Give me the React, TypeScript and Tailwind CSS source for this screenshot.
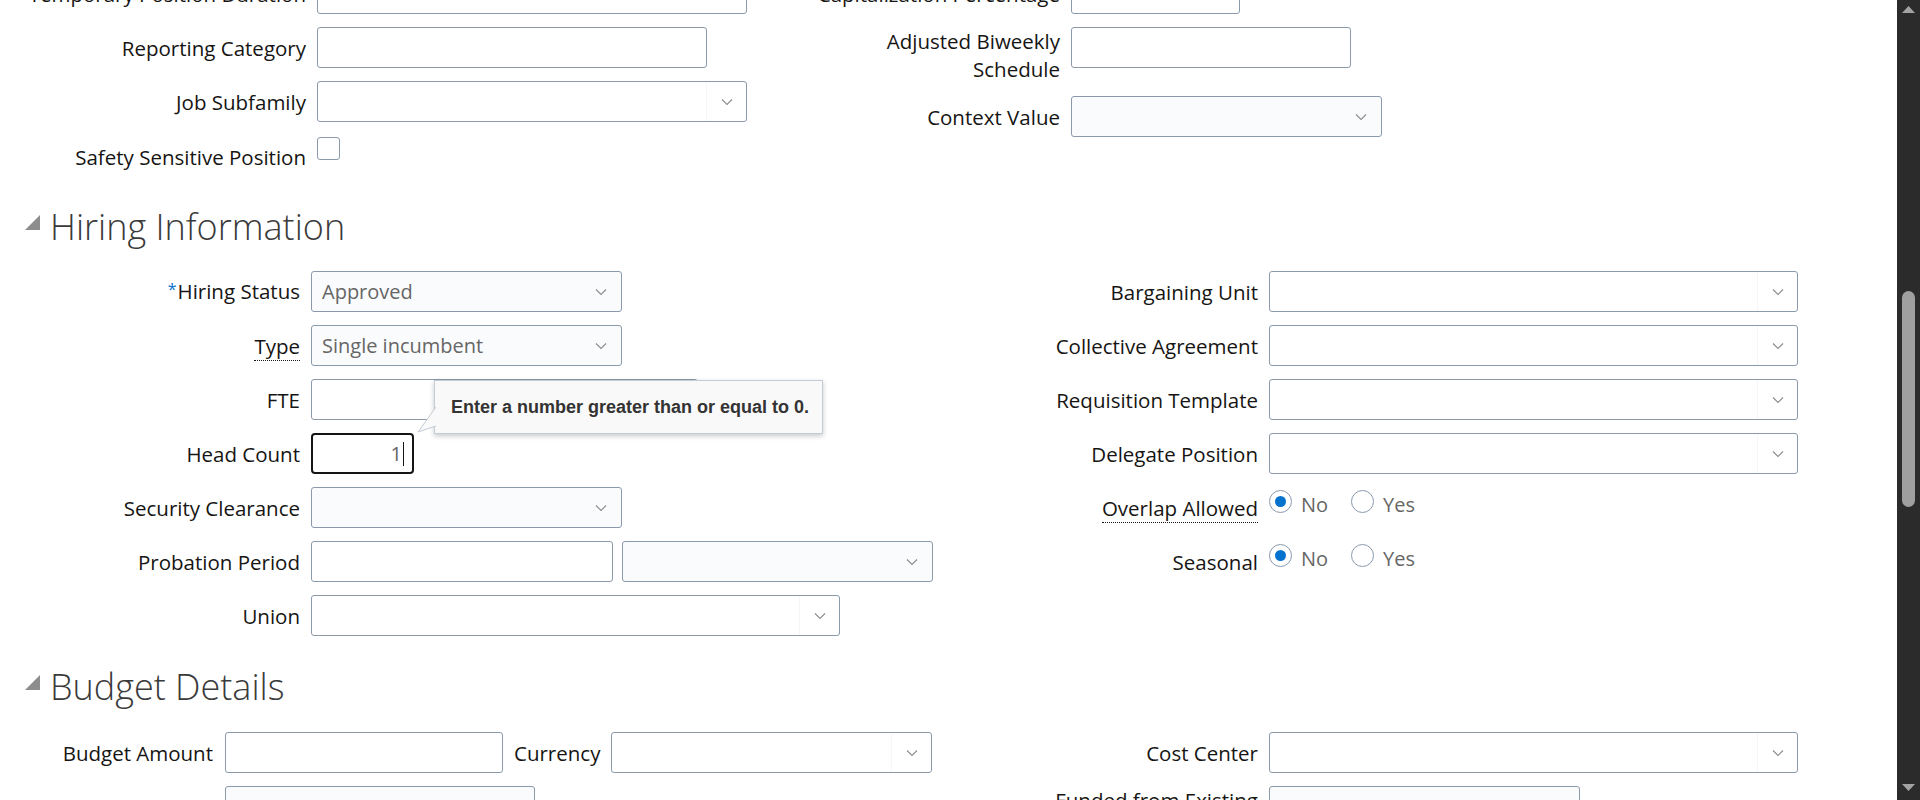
import React from 'react';

const FIELD = 'h-[41px] rounded-[3px] border border-[#8a9aab]';

function Chevron() {
  return (
    <svg width="12" height="8" viewBox="0 0 12 8" className="shrink-0">
      <path d="M1 1.5 6 6.5 11 1.5" fill="none" stroke="#8c8c8c" strokeWidth="1.1" />
    </svg>
  );
}

function Select({ className, value, tinted }: { className: string; value?: string; tinted?: boolean }) {
  return (
    <div className={`${FIELD} ${tinted ? 'bg-[#fafbfc]' : 'bg-white'} ${className} flex items-center`}>
      <span className="flex-1 truncate pl-[10px] text-[20px] leading-[28px] text-[#666666]">{value}</span>
      <span className={`flex h-full w-[40px] items-center justify-center ${tinted ? '' : 'border-l border-[#f5f6f7]'}`}>
        <Chevron />
      </span>
    </div>
  );
}

function Input({ className, tinted }: { className: string; tinted?: boolean }) {
  return <div className={`${FIELD} ${tinted ? 'bg-[#fafbfc]' : 'bg-white'} ${className}`} />;
}

function Label({ children, dotted, required }: { children: React.ReactNode; dotted?: boolean; required?: boolean }) {
  return (
    <div className="self-center text-right text-[20.5px] font-medium leading-[28px] text-[#161513]">
      {required && <span className="relative -top-[4px] mr-[1px] text-[16px] text-[#0572ce]">*</span>}
      {dotted ? <span className="border-b border-dotted border-[#161513]">{children}</span> : children}
    </div>
  );
}

function Radio({ checked, label }: { checked?: boolean; label: string }) {
  return (
    <div className="flex items-start gap-[9px]">
      <span className="mt-[3px] flex h-[23px] w-[23px] items-center justify-center rounded-full border border-[#8a9aab] bg-white">
        {checked && <span className="h-[11px] w-[11px] rounded-full bg-[#0572ce]" />}
      </span>
      <span className="mt-[4px] text-[20px] leading-[28px] text-[#666666]">{label}</span>
    </div>
  );
}

function SectionHeader({ title }: { title: string }) {
  return (
    <div className="flex h-[40px] items-start gap-[10px] pl-[25px]">
      <svg width="15" height="15" viewBox="0 0 15 15" className="mt-[7px] shrink-0">
        <polygon points="15,0 15,15 0,15" fill="#8d8d8d" />
      </svg>
      <h2 className="-mt-[1px] text-[36px] font-light leading-[40px] text-[#3a3a3a]">{title}</h2>
    </div>
  );
}

function Tooltip() {
  return (
    <div className="absolute -top-[53px] left-[123px] z-10 flex h-[54px] w-[389px] items-center border border-[#c3ccd5] bg-[#f9f9f9] pl-[16px] shadow-[0_2px_5px_rgba(0,0,0,0.22)]">
      <svg width="20" height="30" viewBox="0 0 20 30" className="absolute -left-[19px] top-[25px]">
        <polygon points="20,1 2,26 20,20" fill="#f9f9f9" />
        <polyline points="20,1 2,26 20,20" fill="none" stroke="#c3ccd5" strokeWidth="1" />
      </svg>
      <span className="font-['Liberation_Sans',Arial,sans-serif] text-[18px] font-bold text-[#333333]">
        Enter a number greater than or equal to 0.
      </span>
    </div>
  );
}

function Scrollbar() {
  return (
    <aside className="flex h-full w-[23px] shrink-0 flex-col items-center bg-[#2b2b2b]">
      <svg width="13" height="7" viewBox="0 0 13 7" className="mt-[6px]">
        <polygon points="6.5,0 13,7 0,7" fill="#a3a3a3" />
      </svg>
      <div className="mt-[278px] h-[216px] w-[13px] rounded-full bg-[#9f9f9f]" />
      <div className="flex-1" />
      <svg width="13" height="7" viewBox="0 0 13 7" className="mb-[9px]">
        <polygon points="0,0 13,0 6.5,7" fill="#a3a3a3" />
      </svg>
    </aside>
  );
}

export default function App() {
  return (
    <div className="flex h-[800px] w-full overflow-hidden bg-white font-['Open_Sans','Noto_Sans',sans-serif]">
      <main className="min-w-0 flex-1 overflow-hidden">
        <div className="-mt-[27px]">
          {/* Position details (tail) */}
          <section className="flex">
            <div className="grid w-[800px] shrink-0 grid-cols-[306px_auto] content-start gap-x-[11px] gap-y-[13px]">
              <Label>Temporary Position Duration</Label>
              <Input className="w-[430px]" />
              <Label>Reporting Category</Label>
              <Input className="w-[390px]" />
              <Label>Job Subfamily</Label>
              <Select className="w-[430px]" />
              <div className="min-h-[41px] self-center pt-[8px] text-right text-[20.5px] font-medium leading-[28px] text-[#161513]">
                Safety Sensitive Position
              </div>
              <div className="mt-[2px] h-[23px] w-[23px] self-start rounded-[3px] border border-[#8a9aab] bg-white" />
            </div>
            <div className="grid grid-cols-[260px_auto] content-start gap-x-[11px] gap-y-[13px]">
              <Label>Capitalization Percentage</Label>
              <Input className="w-[169px]" />
              <Label>
                Adjusted Biweekly
                <br />
                Schedule
              </Label>
              <div className="self-start">
                <Input className="w-[280px]" />
              </div>
              <Label>Context Value</Label>
              <Select className="w-[311px]" tinted />
            </div>
          </section>

          {/* Hiring Information */}
          <div className="mt-[32px] mb-[23px]">
            <SectionHeader title="Hiring Information" />
          </div>
          <section className="flex">
            <div className="grid w-[960px] shrink-0 grid-cols-[300px_auto] content-start gap-x-[11px] gap-y-[13px]">
              <Label required>Hiring Status</Label>
              <Select className="w-[311px]" value="Approved" tinted />
              <Label dotted>Type</Label>
              <Select className="w-[311px]" value="Single incumbent" tinted />
              <Label>FTE</Label>
              <Input className="w-[387px]" />
              <Label>Head Count</Label>
              <div className="relative w-[103px]">
                <div className="flex h-[41px] w-[103px] items-center justify-end rounded-[4px] border-2 border-[#161513] bg-white pr-[8px]">
                  <span className="text-[20px] leading-[28px] text-[#666666]">1</span>
                  <span className="ml-[1px] h-[24px] w-[1px] bg-[#161513]" />
                </div>
                <Tooltip />
              </div>
              <Label>Security Clearance</Label>
              <Select className="w-[311px]" tinted />
              <Label>Probation Period</Label>
              <div className="flex gap-[9px]">
                <Input className="w-[302px]" />
                <Select className="w-[311px]" tinted />
              </div>
              <Label>Union</Label>
              <Select className="w-[529px]" />
            </div>
            <div className="grid grid-cols-[298px_auto] content-start gap-x-[11px] gap-y-[13px]">
              <Label>Bargaining Unit</Label>
              <Select className="w-[529px]" />
              <Label>Collective Agreement</Label>
              <Select className="w-[529px]" />
              <Label>Requisition Template</Label>
              <Select className="w-[529px]" />
              <Label>Delegate Position</Label>
              <Select className="w-[529px]" />
              <div className="flex min-h-[41px] items-center justify-end">
                <Label dotted>Overlap Allowed</Label>
              </div>
              <div className="flex gap-[23px]">
                <Radio checked label="No" />
                <Radio label="Yes" />
              </div>
              <div className="flex min-h-[41px] items-center justify-end">
                <Label>Seasonal</Label>
              </div>
              <div className="flex gap-[23px]">
                <Radio checked label="No" />
                <Radio label="Yes" />
              </div>
            </div>
          </section>

          {/* Budget Details */}
          <div className="mt-[32px] mb-[24px]">
            <SectionHeader title="Budget Details" />
          </div>
          <section className="flex">
            <div className="grid w-[960px] shrink-0 grid-cols-[213px_auto] content-start gap-x-[12px] gap-y-[13px]">
              <Label>Budget Amount</Label>
              <div className="flex items-start">
                <Input className="w-[278px]" />
                <div className="ml-[11px] mr-[11px] self-center text-[20.5px] font-medium leading-[28px] text-[#161513]">Currency</div>
                <Select className="w-[321px]" />
              </div>
              <Label>Budget Identifier</Label>
              <Input className="w-[310px]" tinted />
            </div>
            <div className="grid grid-cols-[298px_auto] content-start gap-x-[11px] gap-y-[13px]">
              <Label>Cost Center</Label>
              <Select className="w-[529px]" />
              <Label>
                Funded from Existing
                <br />
                Position
              </Label>
              <div className="self-start">
                <Input className="w-[311px]" tinted />
              </div>
            </div>
          </section>
        </div>
      </main>
      <Scrollbar />
    </div>
  );
}
